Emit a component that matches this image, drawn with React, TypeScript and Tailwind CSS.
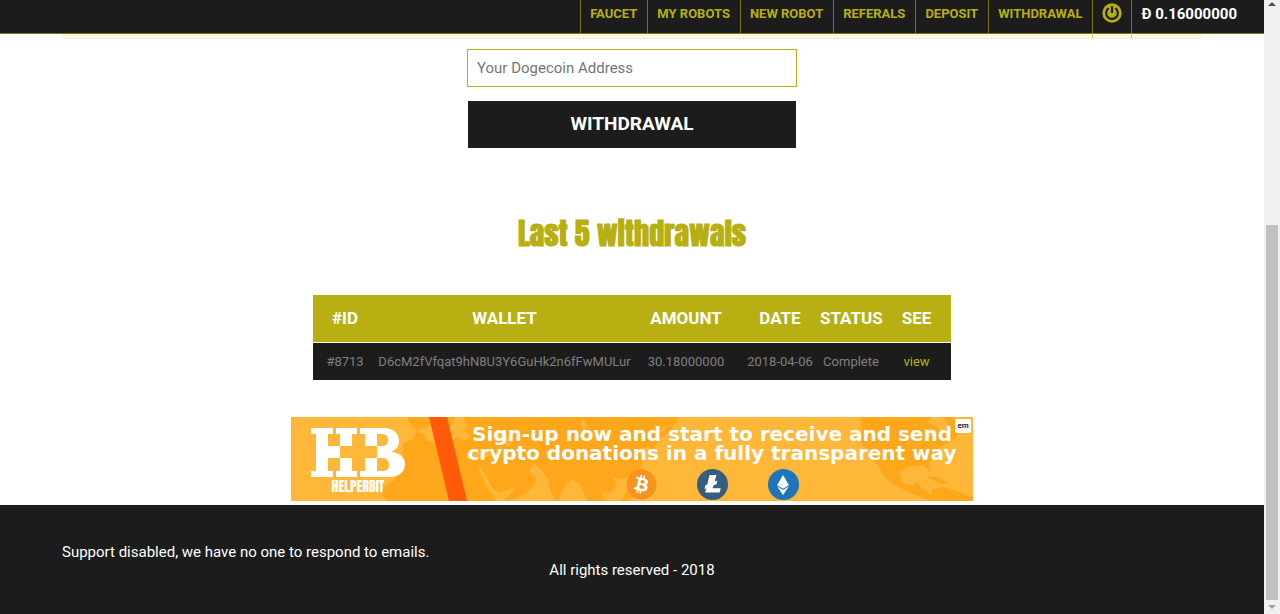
import { FaBitcoin, FaEthereum } from "react-icons/fa";

type Withdrawal = {
  id: string;
  wallet: string;
  amount: string;
  date: string;
  status: string;
};

const links = [
  "FAUCET",
  "MY ROBOTS",
  "NEW ROBOT",
  "REFERALS",
  "DEPOSIT",
  "WITHDRAWAL",
];

const withdrawals: Withdrawal[] = [
  {
    id: "#8713",
    wallet: "D6cM2fVfqat9hN8U3Y6GuHk2n6fFwMULur",
    amount: "30.18000000",
    date: "2018-04-06",
    status: "Complete",
  },
];

function PowerIcon() {
  return (
    <svg viewBox="0 0 20 20" className="w-5 h-5" aria-hidden="true">
      <circle cx="10" cy="10" r="9.7" fill="#b8b012" />
      <path
        d="M6.6 5.2A5.9 5.9 0 1 0 13.4 5.2"
        fill="none"
        stroke="#1c1c1c"
        strokeWidth="2.2"
      />
      <path d="M10 3V10" stroke="#1c1c1c" strokeWidth="2.2" />
    </svg>
  );
}

function Navbar() {
  return (
    <header className="sticky top-0 z-10 h-[34px] bg-[#1c1c1c] border-b border-[#7a7516]">
      <nav className="flex items-start justify-end pr-[27px] text-[13px] leading-[28px] font-bold">
        {links.map((link) => (
          <a
            key={link}
            href="#"
            className="h-[33px] pl-[9px] pr-[10px] border-l border-[#b8b012]/60 text-[#b8b012] whitespace-nowrap">
            {link}
          </a>
        ))}
        <a
          href="#"
          aria-label="Log out"
          className="h-[38px] px-[9px] pt-[3px] border-l border-[#b8b012]/60">
          <PowerIcon />
        </a>
        <span className="h-[38px] pl-[9px] border-l border-[#b8b012]/60 text-white text-[15px] leading-[28px] whitespace-nowrap">
          Ð 0.16000000
        </span>
      </nav>
    </header>
  );
}

function WithdrawalForm() {
  return (
    <form className="mt-[10px] w-full max-w-[330px] flex flex-col gap-[14px]">
      <input
        type="text"
        aria-label="Your Dogecoin Address"
        placeholder="Your Dogecoin Address"
        className="h-[38px] px-[9px] border border-[#b8b012] bg-white text-[15px] placeholder:text-[#757575]"
      />
      <button
        type="button"
        className="h-[47px] mx-px bg-[#1c1c1c] text-white text-[19px] font-bold">
        WITHDRAWAL
      </button>
    </form>
  );
}

function WithdrawalTable() {
  return (
    <table className="mt-[37px] w-full max-w-[638px] table-fixed text-center whitespace-nowrap">
      <thead>
        <tr className="h-[47px] bg-[#b8b012] text-white text-[17px] border-b border-white">
          <th className="w-[64px]">#ID</th>
          <th className="w-[255px]">WALLET</th>
          <th className="w-[108px]">AMOUNT</th>
          <th className="w-[80px]">DATE</th>
          <th className="w-[62px]">STATUS</th>
          <th>SEE</th>
        </tr>
      </thead>
      <tbody>
        {withdrawals.map((item) => (
          <tr
            key={item.id}
            className="h-[38px] bg-[#1c1c1c] text-[#808080] text-[13px]">
            <td>{item.id}</td>
            <td>{item.wallet}</td>
            <td>{item.amount}</td>
            <td>{item.date}</td>
            <td>{item.status}</td>
            <td>
              <a href="#" className="text-[#b8b012]">
                view
              </a>
            </td>
          </tr>
        ))}
      </tbody>
    </table>
  );
}

function BannerArt() {
  return (
    <svg
      viewBox="0 0 682 84"
      preserveAspectRatio="none"
      className="absolute inset-0 w-full h-full"
      aria-hidden="true">
      <rect width="682" height="84" fill="#ffb73a" />
      {/* Africa, Europe and Asia */}
      <path
        d="M116 0L120 9L127 14L122 22L112 26L111 48L104 63L92 70L91 78L96 84H216L228 80L240 72L246 62L238 54L243 47L252 55L257 62L259 72L264 84H268L272 72L280 62L288 66L292 75L296 84H314L310 74L318 76L326 70L322 60L332 62L346 56L352 46L348 34L360 28L366 16L384 0Z"
        fill="#ffa71a"
      />
      <path
        d="M126 14L140 8L150 12L160 9L164 0H172L176 8L172 14L180 18L173 24L166 20L158 26L152 22L146 27L136 24L134 18ZM174 38L190 34L202 37L192 41L176 42ZM186 48L192 54L202 72L208 76L226 70L212 84H206L194 68ZM206 16L214 13L216 20L222 26L216 30L210 24ZM290 4L294 2L296 12L292 16ZM325 64L334 62L331 70L337 76L330 80L324 74Z"
        fill="#ffb73a"
      />
      <path
        d="M356 28L364 20L374 12L376 0H388L379 15L368 22L362 34ZM336 74L342 70L344 78L337 84H330Z"
        fill="#ffa71a"
      />
      {/* the Americas */}
      <path
        d="M569 0L571 14L570 25L578 38L587 48L592 58L600 66L615 74L630 80L640 84H644L638 76L630 70L626 64L622 68L612 66L608 55L616 50L632 48L640 56L638 46L644 36L652 28L664 22L672 10L660 0Z"
        fill="#ffa71a"
      />
      <path
        d="M640 0L636 6L646 9L650 18L658 8L652 0ZM634 12L644 12L642 20L636 18Z"
        fill="#ffb73a"
      />
      <path
        d="M634 59L646 60L658 66L650 67ZM640 73L652 70L666 74L682 80V84H640Z"
        fill="#ffa71a"
      />
      <path d="M138 0H156L176 84H158Z" fill="#ff5a0a" />
    </svg>
  );
}

function HelperbitLogo() {
  return (
    <div className="w-[94px] flex flex-col items-center">
      <svg viewBox="0 0 94 49" className="w-[94px] h-[49px]" aria-hidden="true">
        <g fill="#fff">
          <path d="M0 0H22V6H17V18H29V30H17V43H22V49H0V43H5V6H0Z" />
          <path d="M25 0H46V6H41V18H29V6H25ZM29 30H41V43H46V49H25V43H29Z" />
          <path d="M49 0H72C83 0 88 6 88 13C88 19 85 22 80 24C89 25 94 29 94 36C94 44 88 49 78 49H49V43H54V30H66V43H71C76 43 78 41 78 37C78 33 76 30 71 30H66V18H70C75 18 77 16 77 12C77 8 75 6 70 6H66V18H54V6H49Z" />
        </g>
      </svg>
      <span className="mt-px font-[Anton,sans-serif] text-[14px] leading-[18px]">
        HELPERBIT
      </span>
    </div>
  );
}

function LitecoinIcon() {
  return (
    <svg viewBox="0 0 31 31" className="w-[31px] h-[31px]" aria-hidden="true">
      <circle cx="15.5" cy="15.5" r="15.5" fill="#345d7e" />
      <path
        d="M12.5 6H19.5L17.6 12.6L20.4 11.5L19.4 15.2L16.5 16.4L15.6 19.2H23.8L22.6 23.4H8.2L9.3 19.2L7.4 19.9L8.4 16.3L10.3 15.4Z"
        fill="#fff"
      />
    </svg>
  );
}

function Banner() {
  return (
    <a
      href="#"
      className="relative mt-[37px] mb-[4px] w-full max-w-[682px] h-[84px] flex text-white overflow-hidden">
      <BannerArt />
      <div className="relative w-[160px] shrink-0 pl-[20px] pt-[11px]">
        <HelperbitLogo />
      </div>
      <div className="relative flex-1 pt-[8px] flex flex-col items-center">
        <p className="font-['DejaVu_Sans',sans-serif] text-[20px] leading-[19px] font-bold text-center whitespace-nowrap">
          Sign-up now and start to receive and send
          <br />
          crypto donations in a fully transparent way
        </p>
        <div className="mt-[6px] flex gap-[40px]">
          <span className="w-[31px] h-[31px] rounded-full bg-radial from-white from-60% to-transparent to-60% text-[#f7931e]">
            <FaBitcoin className="w-full h-full" />
          </span>
          <LitecoinIcon />
          <span className="w-[31px] h-[31px] rounded-full bg-[#1e75b9] flex items-center justify-center">
            <FaEthereum className="w-5 h-5" />
          </span>
        </div>
      </div>
      <span className="absolute top-[2px] right-[2px] w-[16px] h-[14px] rounded-xs bg-white text-[#1d2440] text-[8px] leading-[13px] font-bold text-center">
        em
      </span>
    </a>
  );
}

function Footer() {
  return (
    <footer className="flex-1 bg-[#1c1c1c] text-white text-[15px] leading-[18px] px-[62px] pt-[38px] pb-9">
      <p>Support disabled, we have no one to respond to emails.</p>
      <p className="text-center">All rights reserved - 2018</p>
    </footer>
  );
}

function Scrollbar() {
  return (
    <div
      className="sticky top-0 w-4 h-screen shrink-0 bg-[#f1f1f1] flex flex-col items-center"
      aria-hidden="true">
      <svg viewBox="0 0 8 4" className="mt-[2px] w-2 h-1">
        <path d="M4 0L8 4H0Z" fill="#505050" />
      </svg>
      <div className="flex-[219]" />
      <div className="flex-[375] w-3 bg-[#c1c1c1]" />
      <svg viewBox="0 0 8 4" className="mt-[5px] mb-[5px] w-2 h-1">
        <path d="M0 0H8L4 4Z" fill="#a3a3a3" />
      </svg>
    </div>
  );
}

export default function App() {
  return (
    <div className="flex min-h-screen bg-white font-[Roboto,sans-serif]">
      <div className="flex-1 min-w-0 flex flex-col">
        <Navbar />
        <main className="flex flex-col items-center">
          <div className="self-stretch mx-[62px] h-[5px] rounded-b border-b border-[#fdebcb] bg-[#fff6e5]" />
          <WithdrawalForm />
          <h2 className="mt-[61px] font-[Anton,Impact,sans-serif] text-[30px] leading-[49px] font-bold text-[#b8b012]">
            Last 5 withdrawals
          </h2>
          <WithdrawalTable />
          <Banner />
        </main>
        <Footer />
      </div>
      <Scrollbar />
    </div>
  );
}
